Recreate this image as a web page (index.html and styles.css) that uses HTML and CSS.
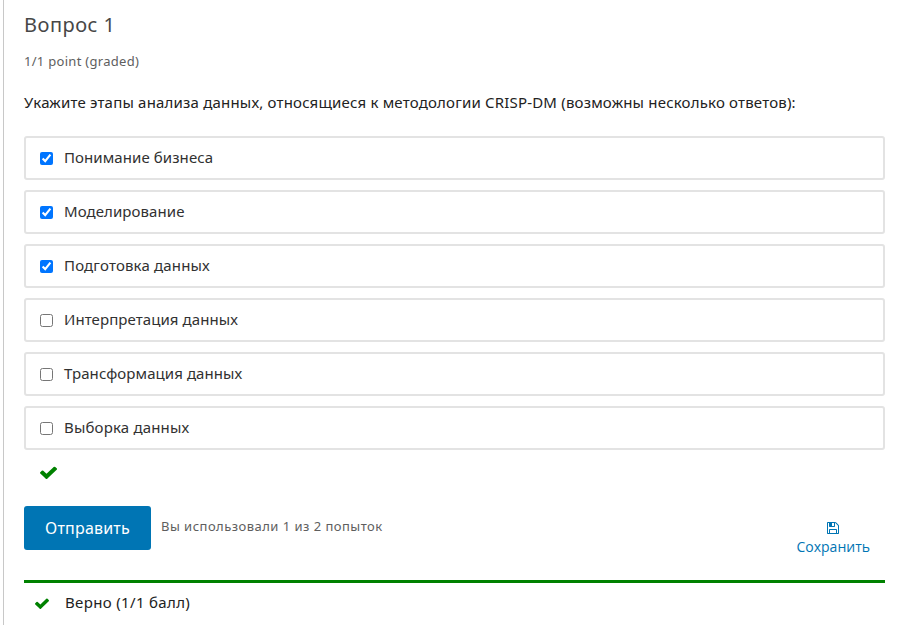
FILE: index.html
```html
<!DOCTYPE html>
<html lang="ru">
<head>
<meta charset="utf-8">
<title>Вопрос 1</title>
<link rel="stylesheet" href="styles.css">
</head>
<body>
<main class="problem">
  <h3 class="title"><span>Вопрос 1</span></h3>
  <div class="progress"><span>1/1 point (graded)</span></div>
  <p class="question"><span>Укажите этапы анализа данных, относящиеся к методологии CRISP-DM (возможны несколько ответов):</span></p>
  <div class="choices">
    <label class="choice"><input type="checkbox" checked><span>Понимание бизнеса</span></label>
    <label class="choice"><input type="checkbox" checked><span>Моделирование</span></label>
    <label class="choice wide"><input type="checkbox" checked><span>Подготовка данных</span></label>
    <label class="choice"><input type="checkbox"><span>Интерпретация данных</span></label>
    <label class="choice"><input type="checkbox"><span>Трансформация данных</span></label>
    <label class="choice wide"><input type="checkbox"><span>Выборка данных</span></label>
  </div>
  <div class="status">
    <svg class="check" viewBox="121 270 1550 1252" preserveAspectRatio="none"><path d="M1671 566q0 40-28 68l-724 724-136 136q-28 28-68 28t-68-28l-136-136-362-362q-28-28-28-68t28-68l136-136q28-28 68-28t68 28l294 295 656-657q28-28 68-28t68 28l136 136q28 28 28 68z"/></svg>
  </div>
  <div class="actions">
    <button class="submit" type="button"><span>Отправить</span></button>
    <div class="attempts"><span>Вы использовали 1 из 2 попыток</span></div>
    <button class="save" type="button">
      <svg class="disk" viewBox="128 128 1536 1536"><path d="M512 1536h768v-384h-768v384zm896 0h128v-896q0-14-10-38.5t-20-34.5l-281-281q-10-10-34-20t-39-10v416q0 40-28 68t-68 28h-576q-40 0-68-28t-28-68v-416h-128v1280h128v-416q0-40 28-68t68-28h832q40 0 68 28t28 68v416zm-384-928v-320q0-13-9.5-22.5t-22.5-9.5h-192q-13 0-22.5 9.5t-9.5 22.5v320q0 13 9.5 22.5t22.5 9.5h192q13 0 22.5-9.5t9.5-22.5zm640 32v928q0 40-28 68t-68 28h-1344q-40 0-68-28t-28-68v-1344q0-40 28-68t68-28h928q40 0 88 20t76 48l280 280q28 28 48 76t20 88z"/></svg>
      <span>Сохранить</span>
    </button>
  </div>
  <div class="notice">
    <svg class="check small" viewBox="121 270 1550 1252" preserveAspectRatio="none"><path d="M1671 566q0 40-28 68l-724 724-136 136q-28 28-68 28t-68-28l-136-136-362-362q-28-28-28-68t28-68l136-136q28-28 68-28t68 28l294 295 656-657q28-28 68-28t68 28l136 136q28 28 28 68z"/></svg>
    <span>Верно (1/1 балл)</span>
  </div>
</main>
</body>
</html>
```
FILE: styles.css
```css
* { box-sizing: border-box; }
body {
  margin: 0;
  background: #fff;
  font-family: "Noto Sans", "Open Sans", sans-serif;
  font-size: 15px;
  color: #222;
  overflow: hidden;
}
.problem {
  height: 625px;
  margin-left: 3px;
  padding: 10px 15px 0 20px;
  border-left: 1px solid #c8c8c8;
  white-space: nowrap;
}
.title {
  margin: 0;
  height: 30px;
  line-height: 29px;
  font-size: 20px;
  font-weight: 400;
  letter-spacing: .5px;
  color: #474747;
}
.progress {
  margin-top: 12px;
  height: 20px;
  line-height: 19px;
  font-size: 13px;
  letter-spacing: .29px;
  color: #5e5e5e;
}
.question {
  margin: 19px 0 0;
  height: 45px;
  line-height: 22px;
  letter-spacing: .19px;
  color: #222;
}
.choices { display: flex; flex-direction: column; gap: 10px; }
.choice {
  display: flex;
  align-items: center;
  height: 44px;
  padding: 0 14px 2px;
  border: 2px solid #e3e3e3;
  border-radius: 3px;
  letter-spacing: .08px;
  color: #313131;
}
.choice.wide { letter-spacing: .17px; }
.choice input { width: 13px; height: 13px; margin: 3px 11px 0 0; flex: none; }
.choice span { line-height: 20px; }
.status { height: 56px; padding: 16px 0 0 16px; }
.check { display: block; width: 17px; height: 13px; fill: #008100; }
.actions { display: flex; height: 74px; }
.submit {
  width: 127px;
  height: 44px;
  padding: 0;
  border: 0;
  border-radius: 3px;
  background: #0075b4;
  color: #fff;
  font: 16px/44px "Noto Sans", sans-serif;
  letter-spacing: .2px;
}
.attempts { margin-left: 10px; line-height: 40px; font-size: 13px; letter-spacing: .47px; color: #5e5e5e; }
.save {
  display: flex;
  flex-direction: column;
  align-items: center;
  margin: 16px 15px 0 auto;
  padding: 0;
  height: 40px;
  border: 0;
  background: none;
  color: #0075b4;
  font: 14px/20px "Open Sans", sans-serif;
}
.disk { width: 12px; height: 12px; margin-bottom: 3px; fill: currentColor; }
.notice {
  display: flex;
  height: 46px;
  padding-left: 11px;
  border-top: 3px solid #008100;
  line-height: 38px;
  letter-spacing: .34px;
  color: #222;
}
.small { width: 14px; height: 11px; margin: 15px 16px 0 0; }
```
